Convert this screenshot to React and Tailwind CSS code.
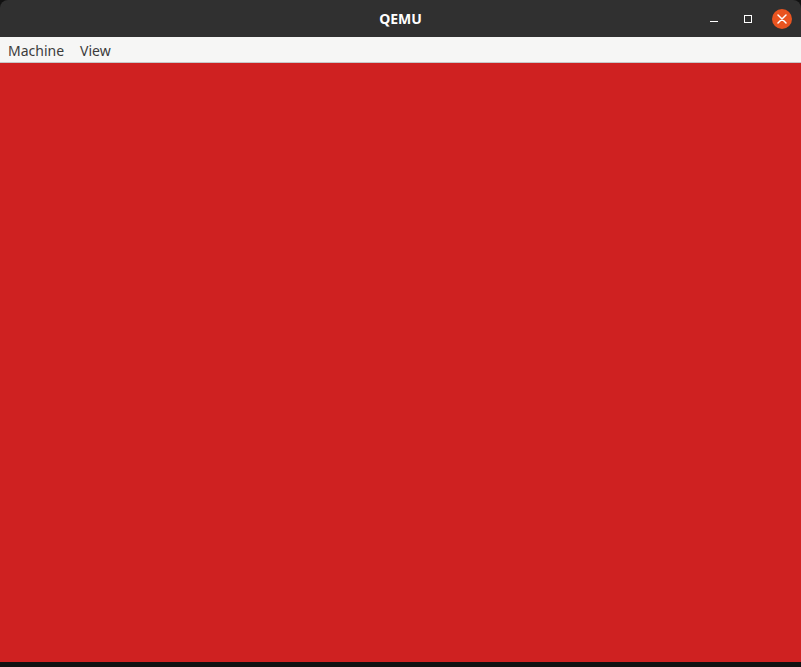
export default function App() {
  return (
    <div className="w-[801px] h-[667px] flex flex-col bg-[#111111] overflow-hidden" style={{ fontFamily: '"Noto Sans", "DejaVu Sans", sans-serif' }}>
      <div className="relative h-[37px] shrink-0 bg-[#303030] rounded-t-[8px] flex items-center justify-center">
        <span className="text-white font-bold text-[14px]">QEMU</span>
        <div className="absolute right-[9px] top-0 h-full flex items-center">
          <div className="w-[34px] flex justify-center pt-[6px]">
            <div className="w-[8px] h-[1px] bg-white" />
          </div>
          <div className="w-[34px] flex justify-center">
            <div className="w-[8px] h-[8px] border border-white" />
          </div>
          <div className="w-[20px] h-[20px] rounded-full bg-[#e95420] flex items-center justify-center ml-[7px]">
            <svg width="10" height="10" viewBox="0 0 10 10">
              <path d="M1 1L9 9M9 1L1 9" stroke="white" strokeWidth="1.5" strokeLinecap="round" />
            </svg>
          </div>
        </div>
      </div>
      <div className="h-[26px] shrink-0 bg-[#f6f6f5] border-b border-[#c8c8c8] flex items-center px-[8px] gap-[16px] text-[14px] text-[#3c3c3c] pt-[1px]">
        <span>Machine</span>
        <span>View</span>
      </div>
      <div className="h-[599px] shrink-0 bg-[#cf2121]" />
    </div>
  );
}
